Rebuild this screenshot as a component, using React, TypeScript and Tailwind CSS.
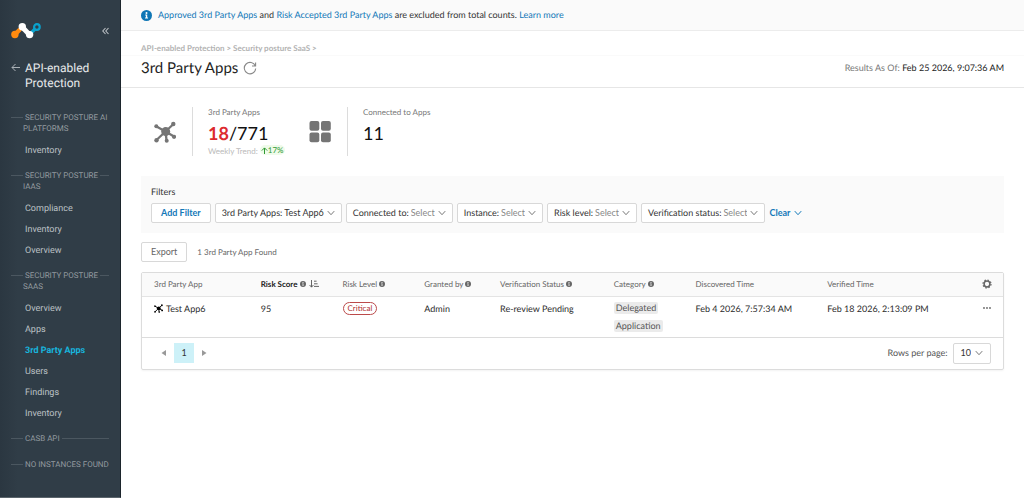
import type { ReactNode } from "react";

const navSections = [
  {
    heading: ["SECURITY POSTURE AI", "PLATFORMS"],
    items: ["Inventory"],
  },
  {
    heading: ["SECURITY POSTURE", "IAAS"],
    items: ["Compliance", "Inventory", "Overview"],
  },
  {
    heading: ["SECURITY POSTURE", "SAAS"],
    items: ["Overview", "Apps", "3rd Party Apps", "Users", "Findings", "Inventory"],
  },
  { heading: ["CASB API"], items: [] },
  { heading: ["NO INSTANCES FOUND"], items: [] },
];

const filters = [
  { id: "apps", label: "3rd Party Apps:", value: "Test App6" },
  { id: "connected", label: "Connected to:", value: "Select" },
  { id: "instance", label: "Instance:", value: "Select" },
  { id: "risk", label: "Risk level:", value: "Select" },
  { id: "verification", label: "Verification status:", value: "Select" },
];

const columns = [
  { title: "3rd Party App", width: "w-[12.4%]" },
  { title: "Risk Score", width: "w-[9.5%]", info: true, sorted: true },
  { title: "Risk Level", width: "w-[9.5%]", info: true },
  { title: "Granted by", width: "w-[8.8%]", info: true },
  { title: "Verification Status", width: "w-[13.2%]", info: true },
  { title: "Category", width: "w-[9.5%]", info: true },
  { title: "Discovered Time", width: "w-[15.3%]" },
  { title: "Verified Time", width: "w-[17%]" },
];

function Logo() {
  return (
    <svg viewBox="0 0 30 16" className="h-4 w-[30px]" aria-label="Home">
      <path d="M4 11.4 8.4 7" stroke="#ff8a0f" strokeWidth="4.4" strokeLinecap="round" />
      <circle cx="3.9" cy="11.5" r="3.7" fill="#ff8a0f" />
      <path d="M18.5 11.5 24 6" stroke="#0aa2cc" strokeWidth="3.4" />
      <circle cx="25.9" cy="4" r="2.8" fill="#303d47" stroke="#0aa2cc" strokeWidth="2.2" />
      <path d="M11.4 4.2 18.4 11.6" stroke="#fff" strokeWidth="5" />
      <circle cx="11.3" cy="3.8" r="3.7" fill="#fff" />
      <circle cx="18.6" cy="11.6" r="3.7" fill="#fff" />
    </svg>
  );
}

function Chevron({ className = "text-[#777]" }: { className?: string }) {
  return (
    <svg viewBox="0 0 8 8" fill="none" stroke="currentColor" className={`h-2 w-2 shrink-0 ${className}`}>
      <path d="M1 2.4 4 5.7 7 2.4" strokeLinecap="round" strokeLinejoin="round" />
    </svg>
  );
}

function InfoIcon({ className }: { className: string }) {
  return (
    <svg viewBox="0 0 12 12" className={`inline-block shrink-0 ${className}`}>
      <circle cx="6" cy="6" r="6" fill="currentColor" />
      <circle cx="6" cy="3.2" r="1.1" fill="#fff" />
      <path d="M4.6 5h2.2v3.2h.9v1H4.4v-1h.9V6h-.7z" fill="#fff" />
    </svg>
  );
}

function HubIcon({ className }: { className: string }) {
  return (
    <svg viewBox="0 0 22 22" className={`shrink-0 ${className}`} fill="currentColor" stroke="currentColor">
      <path d="M11.5 10.5 2.5 5.5M11.5 10.5 19 3.5M11.5 10.5 2.5 19M11.5 10.5 20 15.5M11.5 10.5 12.5 19" strokeWidth="2.3" />
      <g stroke="none">
        <circle cx="11.7" cy="10.6" r="4.5" />
        <circle cx="2.3" cy="5.2" r="2" />
        <circle cx="19.3" cy="3" r="2.2" />
        <circle cx="2.5" cy="19.2" r="2.2" />
        <circle cx="20" cy="15.8" r="2.1" />
        <circle cx="12.7" cy="19.7" r="2" />
      </g>
    </svg>
  );
}

function Stat({ icon, label, children }: { icon: ReactNode; label: string; children: ReactNode }) {
  return (
    <div className="flex h-[49px] w-[155px] items-center">
      <div className="flex w-[51px] justify-center pr-[3px]">{icon}</div>
      <div className="h-full border-l border-[#dcdcdc] pl-[15px]">
        <p className="text-[8px] leading-[10px] text-[#777]">{label}</p>
        {children}
      </div>
    </div>
  );
}

function Sidebar() {
  return (
    <aside className="w-[121px] shrink-0 border-r border-b border-[#1c252c] border-b-[#5b656c] bg-[#303d47] bg-linear-to-r from-[#2b3741] to-[#303d47] to-15% pl-[11px] pr-[11px] pt-[23px] font-['Roboto',sans-serif] text-[#bcc1c5]">
      <div className="flex h-4 items-center justify-between">
        <Logo />
        <button type="button" aria-label="Collapse menu">
          <svg viewBox="0 0 8 8" className="h-2 w-2" fill="none" stroke="currentColor">
            <path d="M4.5 1 1.8 4 4.5 7M7.5 1 4.8 4 7.5 7" strokeWidth="1.1" />
          </svg>
        </button>
      </div>
      <a href="#back" className="mt-[22px] flex gap-[5px] text-[12px] leading-[15px] text-[#e6e9eb]">
        <svg viewBox="0 0 9 9" className="mt-[2px] h-[9px] w-[9px] shrink-0" fill="none" stroke="#aab1b6">
          <path d="M9 4.5H1M4.5 1 1 4.5 4.5 8" />
        </svg>
        <span>
          API-enabled
          <br />
          Protection
        </span>
      </a>
      <nav className="mt-[21px] flex flex-col">
        {navSections.map((section) => (
          <section key={section.heading.join(" ")} className="mb-2">
            <h2 className="text-[8px] leading-[11px] text-[#929a9f]">
              <span className="flex items-center gap-[2px] whitespace-nowrap">
                <span className="h-px w-3 shrink-0 bg-[#4b5760]" />
                {section.heading[0]}
                <span className="h-px flex-1 bg-[#4b5760]" />
              </span>
              {section.heading[1] && <span className="block pl-3">{section.heading[1]}</span>}
            </h2>
            <ul className="mt-[7px]">
              {section.items.map((item) => (
                <li key={item}>
                  <a
                    href="#nav"
                    className={
                      item === "3rd Party Apps"
                        ? "block pl-[14px] text-[9px] leading-[21px] font-bold text-[#18b4dc]"
                        : "block pl-[14px] text-[9px] leading-[21px]"
                    }
                  >
                    {item}
                  </a>
                </li>
              ))}
            </ul>
          </section>
        ))}
      </nav>
    </aside>
  );
}

function Filters() {
  return (
    <section className="bg-[#fafafa] p-[10px]">
      <h2 className="text-[9px] leading-[12px] text-[#333]">Filters</h2>
      <div className="mt-[5px] flex flex-wrap gap-1 text-[9px]">
        <button type="button" className="h-5 rounded-xs border border-[#d8d8d8] bg-white px-[9px] font-bold text-[#1278b8]">
          Add Filter
        </button>
        {filters.map((filter) => (
          <label
            key={filter.id}
            className="flex h-5 items-center gap-[2px] rounded-xs border border-[#d8d8d8] bg-white px-[6px] text-[#333]"
          >
            {filter.label}
            <select
              className={
                filter.value === "Select"
                  ? "field-sizing-content appearance-none text-[#888]"
                  : "field-sizing-content appearance-none"
              }
            >
              <option>{filter.value}</option>
            </select>
            <span className="pl-[1px]">
              <Chevron />
            </span>
          </label>
        ))}
        <button type="button" className="flex h-5 items-center gap-1 font-bold text-[#1278b8]">
          Clear
          <Chevron className="text-[#1278b8]" />
        </button>
      </div>
    </section>
  );
}

function AppsTable() {
  return (
    <section className="rounded-xs border border-[#dcdcdc] shadow-xs">
      <table className="w-full table-fixed text-left text-[9px]">
        <thead className="bg-[#fafafa]">
          <tr className="h-[23px] border-b border-[#e4e4e4]">
            {columns.map((column) => (
              <th
                key={column.title}
                className={`${column.width} pl-3 text-[8px] leading-[12px] whitespace-nowrap ${
                  column.sorted ? "font-bold text-[#222]" : "font-normal text-[#666]"
                }`}
              >
                <span className="flex items-center gap-[2px]">
                  {column.title}
                  {column.info && <InfoIcon className="h-[6px] w-[6px] text-[#666]" />}
                  {column.sorted && (
                    <svg viewBox="0 0 10 8" className="ml-[1px] h-2 w-[10px]" fill="none" stroke="#555" strokeWidth="0.9">
                      <path d="M2.5 0v7M.6 5l1.9 2.2L4.4 5M5 1.2h2.6M5 3.8h3.6M5 6.4h5" />
                    </svg>
                  )}
                </span>
              </th>
            ))}
            <th className="pr-[11px]">
              <button type="button" aria-label="Table settings" className="ml-auto block">
                <svg viewBox="0 0 10 10" className="h-[10px] w-[10px]" fill="none" stroke="#666">
                  <circle cx="5" cy="5" r="2.9" strokeWidth="1.5" />
                  <circle cx="5" cy="5" r="4" strokeWidth="1.2" strokeDasharray="1.57 1.57" />
                </svg>
              </button>
            </th>
          </tr>
        </thead>
        <tbody>
          <tr className="h-[41px] border-b border-[#dcdcdc] text-[#2b2b2b]">
            <td className="pt-[5px] pl-3 align-top">
              <span className="flex items-center gap-[3px] leading-[13px]">
                <HubIcon className="h-[9px] w-[9px] text-black" />
                Test App6
              </span>
            </td>
            <td className="pt-[5px] pl-3 align-top leading-[13px]">95</td>
            <td className="pt-[5px] pl-3 align-top">
              <span className="block w-fit rounded-full border border-[#bb4a4a] px-1 text-[8px] leading-[11px] text-[#b03030]">
                Critical
              </span>
            </td>
            <td className="pt-[5px] pl-3 align-top leading-[13px]">Admin</td>
            <td className="pt-[5px] pl-3 align-top leading-[13px]">Re-review Pending</td>
            <td className="pt-[5px] pl-3 align-top">
              <div className="flex flex-col items-start gap-[6px] leading-[12px] text-[#555]">
                <span className="rounded-xs bg-[#ebebeb] px-[2px]">Delegated</span>
                <span className="rounded-xs bg-[#ebebeb] px-[2px]">Application</span>
              </div>
            </td>
            <td className="pt-[5px] pl-3 align-top leading-[13px]">Feb 4 2026, 7:57:34 AM</td>
            <td className="pt-[5px] pl-3 align-top leading-[13px]">Feb 18 2026, 2:13:09 PM</td>
            <td className="pt-[5px] pr-[11px] align-top">
              <button type="button" aria-label="Row actions" className="ml-auto flex h-[13px] items-center">
                <svg viewBox="0 0 10 2" className="h-[2px] w-[10px]" fill="#666">
                  <circle cx="2" cy="1" r="0.9" />
                  <circle cx="5" cy="1" r="0.9" />
                  <circle cx="8" cy="1" r="0.9" />
                </svg>
              </button>
            </td>
          </tr>
        </tbody>
      </table>
      <div className="flex h-[31px] items-center pr-3 pl-[19px] text-[9px] text-[#555]">
        <button type="button" aria-label="Previous page">
          <svg viewBox="0 0 5 6" className="h-[6px] w-[5px]" fill="#999">
            <path d="M5 0v6L.5 3z" />
          </svg>
        </button>
        <button type="button" className="mx-2 h-5 w-5 bg-[#cdf1f8] text-[#333]">
          1
        </button>
        <button type="button" aria-label="Next page">
          <svg viewBox="0 0 5 6" className="h-[6px] w-[5px]" fill="#999">
            <path d="M0 0v6l4.5-3z" />
          </svg>
        </button>
        <label htmlFor="rows" className="ml-auto">
          Rows per page:
        </label>
        <div className="ml-[5px] flex h-[21px] items-center gap-1 rounded-xs border border-[#d8d8d8] px-[7px] text-[#333]">
          <select id="rows" className="field-sizing-content appearance-none">
            <option>10</option>
          </select>
          <Chevron />
        </div>
      </div>
    </section>
  );
}

export default function App() {
  return (
    <div className="flex min-h-screen bg-white font-['Lato',sans-serif] [text-rendering:geometricPrecision]">
      <Sidebar />
      <main className="min-w-0 flex-1">
        <div className="flex h-[31px] items-center gap-[6px] border-b border-[#ececec] bg-[#fafafa] px-5 text-[9px] text-[#333]">
          <InfoIcon className="h-[11px] w-[11px] text-[#0f76b5]" />
          <p>
            <a href="#approved" className="text-[#1278b8]">Approved 3rd Party Apps</a> and{" "}
            <a href="#accepted" className="text-[#1278b8]">Risk Accepted 3rd Party Apps</a> are excluded from total counts.{" "}
            <a href="#more" className="text-[#1278b8]">Learn more</a>
          </p>
        </div>
        <header className="border-b border-[#e6e6e6] pt-[11px]">
          <p className="border-b border-[#fafafa] px-5 pb-[1px] text-[8px] leading-[12px] font-bold text-[#b3b3b3]">
            API-enabled Protection &gt; Security posture SaaS &gt;
          </p>
          <div className="flex h-[31px] items-center justify-between px-5 pb-2">
            <div className="flex items-center gap-[5px]">
              <h1 className="text-[15px] leading-[20px] text-[#1f1f1f]">3rd Party Apps</h1>
              <button type="button" aria-label="Refresh">
                <svg viewBox="0 0 14 14" className="h-[14px] w-[14px]" fill="none" stroke="#888">
                  <path d="M12.3 5A5.7 5.7 0 1 0 12.7 7.5M12.6 1.5V5H9" strokeWidth="1.1" />
                </svg>
              </button>
            </div>
            <p className="text-[9px] text-[#777]">
              Results As Of: <span className="text-[#222]">Feb 25 2026, 9:07:36 AM</span>
            </p>
          </div>
        </header>
        <div className="px-5 pt-[19px]">
          <div className="flex">
            <Stat icon={<HubIcon className="h-[22px] w-[22px] text-[#757575]" />} label="3rd Party Apps">
              <p className="mt-[4px] text-[18px] leading-[24px] text-[#111]">
                <span className="font-bold text-[#dc2a2e]">18</span>/771
              </p>
              <p className="text-[8px] leading-[10px] whitespace-nowrap text-[#bbb]">
                Weekly Trend:{" "}
                <span className="inline-flex items-center rounded-full bg-[#effbea] px-[1px] text-[#2f9a34]">
                  <svg viewBox="0 0 7 7" className="h-[7px] w-[7px]" fill="none" stroke="currentColor">
                    <path d="M3.5 7V1M.8 3.6 3.5 .9l2.7 2.7" />
                  </svg>
                  17%
                </span>
              </p>
            </Stat>
            <Stat
              icon={
                <svg viewBox="0 0 22 22" className="h-[22px] w-[22px]" fill="#757575">
                  <rect x="0.5" y="0" width="9.8" height="9.8" rx="2" />
                  <rect x="12" y="0" width="9.8" height="9.8" rx="2" />
                  <rect x="0.5" y="11.5" width="9.8" height="9.8" rx="2" />
                  <rect x="12" y="11.5" width="9.8" height="9.8" rx="2" />
                </svg>
              }
              label="Connected to Apps"
            >
              <p className="mt-[4px] text-[18px] leading-[24px] text-[#111]">11</p>
            </Stat>
          </div>
          <div className="mt-5">
            <Filters />
          </div>
          <div className="mt-[9px] mb-[10px] flex items-center gap-[10px] text-[#666]">
            <button type="button" className="h-5 rounded-xs border border-[#d8d8d8] px-[9px] text-[9px]">
              Export
            </button>
            <p className="text-[8px]">1 3rd Party App Found</p>
          </div>
          <AppsTable />
        </div>
      </main>
    </div>
  );
}
